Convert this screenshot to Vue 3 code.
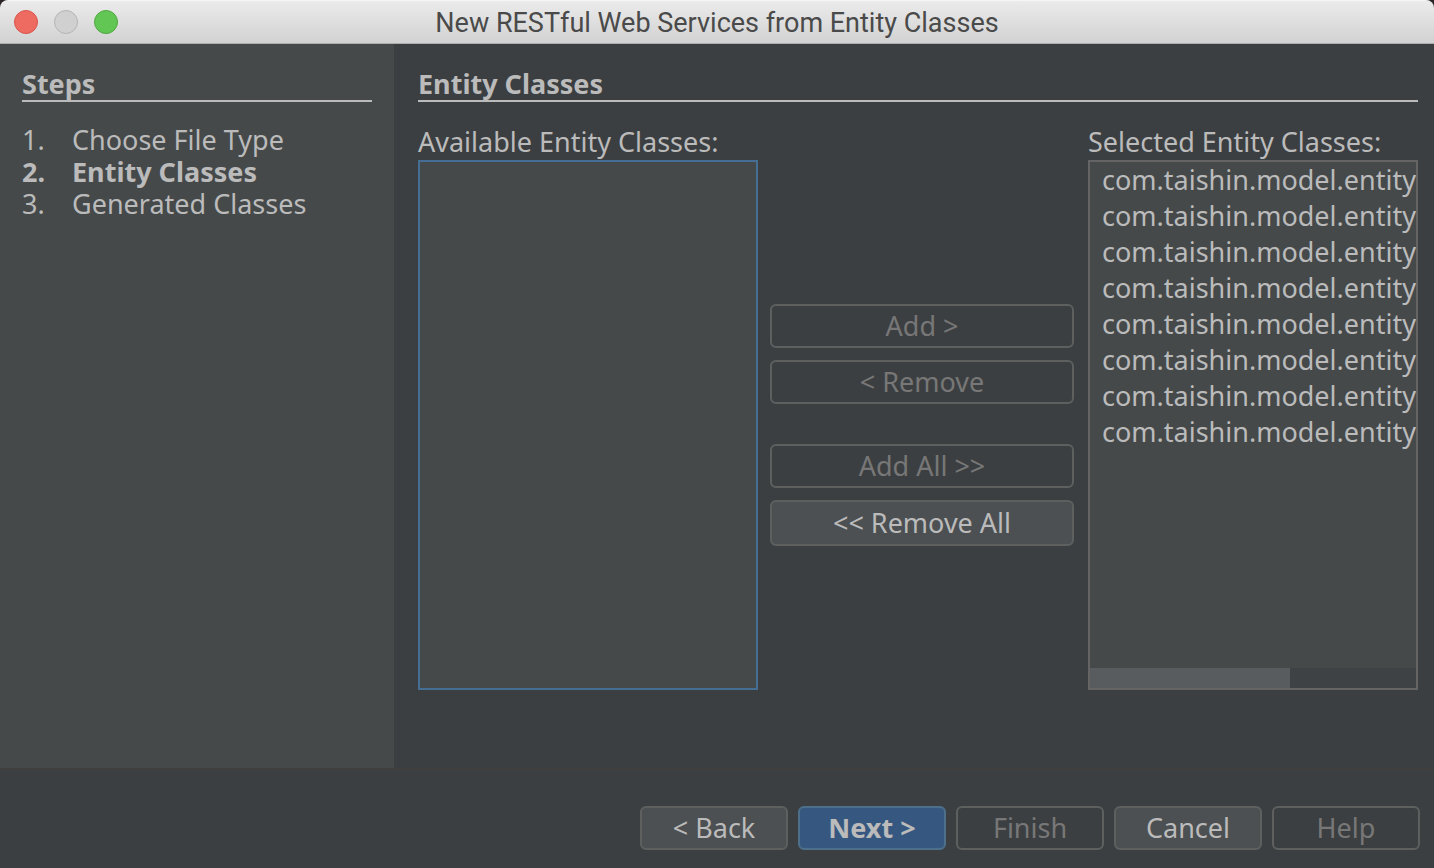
<script setup>
const steps = ['Choose File Type', 'Entity Classes', 'Generated Classes']
const currentStep = 1
const selected = Array.from({ length: 8 }, () => 'com.taishin.model.entity')
const transfer = [
  { label: 'Add >', disabled: true },
  { label: '< Remove', disabled: true },
  { label: 'Add All >>', disabled: true, spaced: true },
  { label: '<< Remove All', disabled: false },
]
const scrollRatio = 200 / 326
</script>

<template>
  <div class="window">
    <header class="titlebar">
      <div class="lights">
        <button class="light close" type="button" aria-label="Close"></button>
        <button class="light minimize" type="button" aria-label="Minimize" disabled></button>
        <button class="light zoom" type="button" aria-label="Zoom"></button>
      </div>
      <h1 class="title">New RESTful Web Services from Entity Classes</h1>
    </header>

    <div class="body">
      <aside class="steps">
        <h2 class="heading">Steps</h2>
        <ol class="step-list">
          <li v-for="(step, i) in steps" :key="step" class="step" :class="{ current: i === currentStep }">
            <span class="number">{{ i + 1 }}.</span>
            <span>{{ step }}</span>
          </li>
        </ol>
      </aside>

      <main class="panel">
        <h2 class="heading">Entity Classes</h2>
        <div class="chooser">
          <section class="column available">
            <div id="available-label" class="label">Available Entity Classes:</div>
            <div class="list focused" role="listbox" tabindex="0" aria-labelledby="available-label"></div>
          </section>

          <div class="transfer">
            <button
              v-for="b in transfer"
              :key="b.label"
              class="btn"
              :class="{ spaced: b.spaced }"
              type="button"
              :disabled="b.disabled"
            >{{ b.label }}</button>
          </div>

          <section class="column selected">
            <div id="selected-label" class="label">Selected Entity Classes:</div>
            <div class="list">
              <ul class="items" role="listbox" aria-labelledby="selected-label">
                <li v-for="(name, i) in selected" :key="i" class="item" role="option">{{ name }}</li>
              </ul>
              <div class="track">
                <div class="thumb" :style="{ width: scrollRatio * 100 + '%' }"></div>
              </div>
            </div>
          </section>
        </div>
      </main>
    </div>

    <footer class="footer">
      <button class="btn" type="button">&lt; Back</button>
      <button class="btn primary" type="button">Next &gt;</button>
      <button class="btn" type="button" disabled>Finish</button>
      <button class="btn" type="button">Cancel</button>
      <button class="btn" type="button" disabled>Help</button>
    </footer>
  </div>
</template>

<style>
body {
  margin: 0;
  background: #2a2326;
}
</style>

<style scoped>
.window {
  display: flex;
  flex-direction: column;
  min-height: 100vh;
  overflow: hidden;
  border-radius: 8px 8px 0 0;
  background: #3c3f41;
  color: #bbbbbb;
  font-family: "Noto Sans", "Open Sans", sans-serif;
  font-size: 27px;
  line-height: 32px;
}

.window * {
  box-sizing: border-box;
}

.titlebar {
  display: grid;
  grid-template-columns: 120px 1fr 120px;
  align-items: center;
  height: 44px;
  border-top: 1px solid #f6f6f6;
  border-bottom: 1px solid #adadad;
  background: linear-gradient(#ebebeb, #d2d2d2);
}

.lights {
  display: flex;
  gap: 16px;
  padding-left: 14px;
}

.light {
  width: 24px;
  height: 24px;
  padding: 0;
  border: 1px solid;
  border-radius: 50%;
}

.close {
  border-color: #d9544d;
  background: #ed6b60;
}

.minimize {
  border-color: #b4b4b4;
  background: #d0d0d0;
}

.zoom {
  border-color: #4fa73f;
  background: #62c655;
}

.title {
  margin: 0;
  padding-top: 2px;
  color: #4a4a4a;
  font-family: Roboto, Inter, sans-serif;
  font-size: 27px;
  font-weight: 400;
  line-height: 32px;
  text-align: center;
  white-space: nowrap;
}

.body {
  display: flex;
  flex: 1;
}

.steps {
  flex: none;
  width: 394px;
  padding: 24px 22px;
  background: #45494a;
}

.heading {
  margin: 0;
  border-bottom: 2px solid #bbbbbb;
  font-size: 27px;
  font-weight: 700;
  line-height: 32px;
}

.step-list {
  margin: 22px 0 0;
  padding: 0;
  list-style: none;
}

.step {
  display: flex;
}

.step.current {
  font-weight: 700;
}

.number {
  width: 50px;
}

.panel {
  display: flex;
  flex: 1;
  flex-direction: column;
  min-width: 0;
  padding: 24px 16px 78px 24px;
}

.chooser {
  display: flex;
  flex: 1;
  padding-top: 24px;
}

.column {
  display: flex;
  flex-direction: column;
  min-width: 0;
}

.available {
  flex: 34 1 0;
}

.selected {
  flex: 33 1 0;
}

.label {
  margin-bottom: 2px;
  white-space: nowrap;
}

.list {
  display: flex;
  flex: 1;
  flex-direction: column;
  justify-content: space-between;
  overflow: hidden;
  border: 2px solid #646464;
  background: #45494a;
}

.list.focused {
  border-color: #466d94;
  outline: none;
}

.items {
  margin: 0;
  padding: 0 0 0 12px;
  list-style: none;
}

.item {
  line-height: 36px;
  white-space: nowrap;
}

.track {
  height: 20px;
  background: #3f4244;
}

.thumb {
  height: 100%;
  background: #595c5e;
}

.transfer {
  display: flex;
  flex: 0 0 304px;
  flex-direction: column;
  justify-content: center;
  gap: 12px;
  margin: 34px 14px 0 12px;
}

.btn {
  height: 44px;
  padding: 0;
  border: 2px solid #5e6060;
  border-radius: 6px;
  background: #4c5052;
  color: #bbbbbb;
  font: inherit;
}

.btn:disabled {
  background: transparent;
  color: #777777;
}

.btn.primary {
  border-color: #4c708c;
  background: #365880;
  font-weight: 700;
}

.transfer .btn:enabled {
  height: 46px;
}

.btn.spaced {
  margin-top: 28px;
}

.footer {
  display: flex;
  justify-content: flex-end;
  gap: 10px;
  padding: 36px 14px 18px;
  border-top: 2px solid #3f3f40;
}

.footer .btn {
  width: 148px;
}
</style>
